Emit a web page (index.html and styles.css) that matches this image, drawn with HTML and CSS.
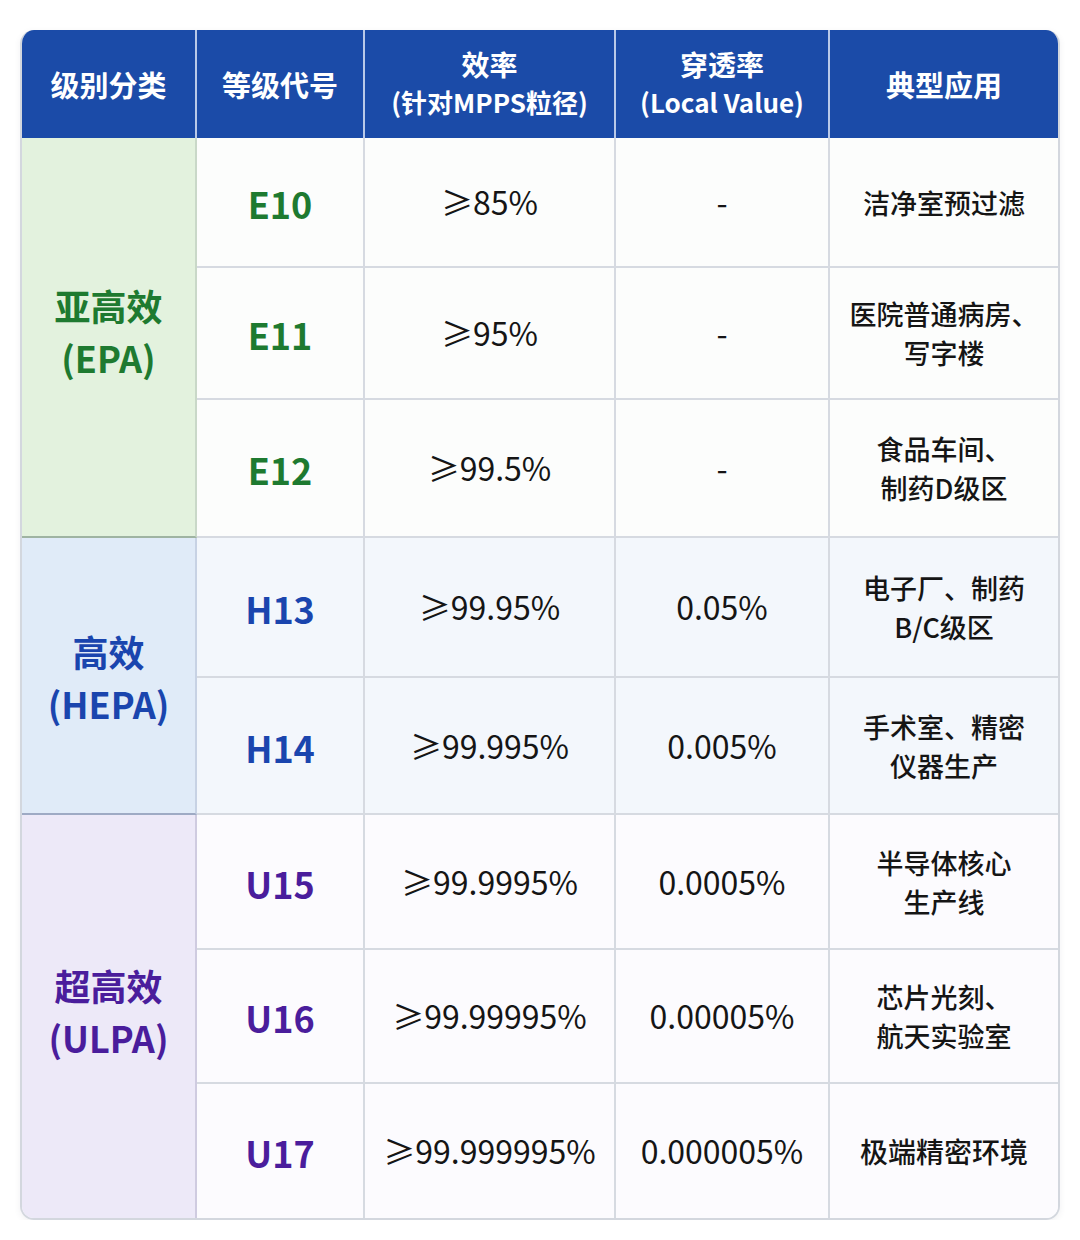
FILE: index.html
```html
<!DOCTYPE html>
<html lang="zh-CN">
<head>
<meta charset="utf-8">
<title>过滤器等级</title>
<link rel="stylesheet" href="styles.css">
</head>
<body>
<div class="table">
  <div class="th">级别分类</div>
  <div class="th">等级代号</div>
  <div class="th two"><span class="t1">效率</span><span class="t2">(针对MPPS粒径)</span></div>
  <div class="th two"><span class="t1">穿透率</span><span class="t2">(Local Value)</span></div>
  <div class="th last">典型应用</div>

  <div class="cat cat-e">亚高效<br>(EPA)</div>
  <div class="td code e">E10</div>
  <div class="td num">≥85%</div>
  <div class="td num">-</div>
  <div class="td app last">洁净室预过滤</div>

  <div class="td code e">E11</div>
  <div class="td num">≥95%</div>
  <div class="td num">-</div>
  <div class="td app last">医院普通病房、<br>写字楼</div>

  <div class="td code e">E12</div>
  <div class="td num">≥99.5%</div>
  <div class="td num">-</div>
  <div class="td app last">食品车间、<br>制药D级区</div>

  <div class="cat cat-h">高效<br>(HEPA)</div>
  <div class="td code h hrow">H13</div>
  <div class="td num hrow">≥99.95%</div>
  <div class="td num hrow">0.05%</div>
  <div class="td app hrow last">电子厂、制药<br>B/C级区</div>

  <div class="td code h hrow">H14</div>
  <div class="td num hrow">≥99.995%</div>
  <div class="td num hrow">0.005%</div>
  <div class="td app hrow last">手术室、精密<br>仪器生产</div>

  <div class="cat cat-u">超高效<br>(ULPA)</div>
  <div class="td code u urow">U15</div>
  <div class="td num urow">≥99.9995%</div>
  <div class="td num urow">0.0005%</div>
  <div class="td app urow last">半导体核心<br>生产线</div>

  <div class="td code u urow">U16</div>
  <div class="td num urow">≥99.99995%</div>
  <div class="td num urow">0.00005%</div>
  <div class="td app urow last">芯片光刻、<br>航天实验室</div>

  <div class="td code u urow bottom">U17</div>
  <div class="td num urow bottom">≥99.999995%</div>
  <div class="td num urow bottom">0.000005%</div>
  <div class="td app big urow bottom last">极端精密环境</div>
</div>
</body>
</html>
```

FILE: styles.css
```css
html, body {
  margin: 0;
  padding: 0;
  background: #ffffff;
}
body {
  font-family: "Noto Sans CJK SC", "Noto Sans", sans-serif;
  color: #1a1a1a;
}
.table {
  box-sizing: border-box;
  width: 1040px;
  margin: 30px 20px 0 20px;
  display: grid;
  grid-template-columns: 175px 168px 251px 214px 228px;
  grid-template-rows: 108px 130px 132px 138px 140px 137px 135px 134px 134px;
  border: 2px solid #d3d7de;
  border-top: none;
  border-radius: 14px;
  overflow: hidden;
  box-shadow: 0 2px 6px rgba(60, 70, 90, 0.08);
}
.th {
  box-sizing: border-box;
  background: #1b4ba8;
  color: #ffffff;
  font-weight: 700;
  font-size: 29px;
  line-height: 37px;
  display: flex;
  flex-direction: column;
  align-items: center;
  justify-content: center;
  text-align: center;
  border-right: 2px solid #b9c9e8;
}
.th .t1 { font-size: 28px; }
.th .t2 { font-size: 26px; }
.th.two { padding-bottom: 2px; }
.th.last { border-right: none; }
.td, .cat {
  box-sizing: border-box;
  display: flex;
  align-items: center;
  justify-content: center;
  text-align: center;
  border-right: 2px solid #d6dae1;
  border-bottom: 2px solid #d6dae1;
  background: #fcfdfc;
}
.td.last { border-right: none; }
.td.bottom { border-bottom: none; }
.cat {
  font-weight: 700;
  font-size: 36px;
  line-height: 52px;
}
.cat-e {
  grid-row: span 3;
  background: #e3f2de;
  color: #1e7a30;
  border-bottom-color: #9fb4a2;
  border-right-color: #c9d8c8;
  padding-bottom: 12px;
}
.cat-h {
  grid-row: span 2;
  background: #e0ebf8;
  color: #1a45ae;
  border-bottom-color: #9eaac4;
  border-right-color: #c7d2e4;
  padding-top: 2px;
}
.cat-u {
  grid-row: span 3;
  background: #ede9f8;
  color: #4a1d9c;
  border-bottom: none;
  border-right-color: #cfcbe0;
  padding-bottom: 12px;
}
.code {
  font-weight: 700;
  font-size: 36px;
  padding-top: 2px;
}
.code.e { color: #1e7a30; }
.code.h { color: #1a45ae; }
.code.u { color: #4a1d9c; }
.num {
  font-size: 32px;
  font-weight: 400;
  color: #151515;
  padding-bottom: 2px;
}
.app {
  font-size: 27px;
  font-weight: 500;
  line-height: 39px;
  color: #151515;
}
.app.big {
  font-size: 28px;
}
.hrow { background: #f3f7fc; }
.urow { background: #fcfbfe; }
```
